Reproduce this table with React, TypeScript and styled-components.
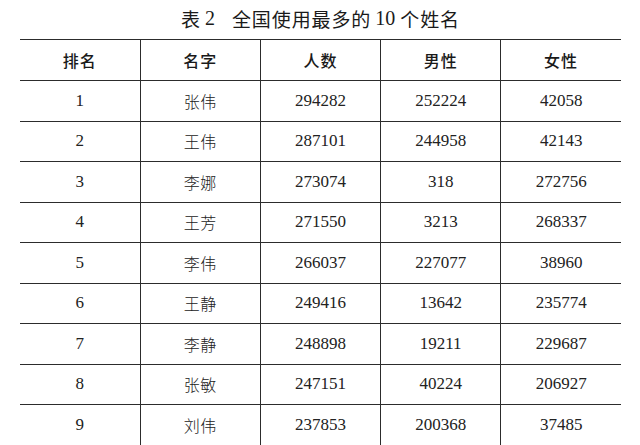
import styled, { createGlobalStyle } from "styled-components";

/* ── GLOBAL ── */

const GlobalStyle = createGlobalStyle`
  html, body {
    margin: 0;
    padding: 0;
    background: #ffffff;
  }
`;

/* ── STYLED COMPONENTS ── */

const Page = styled.div`
  width: 640px;
  height: 445px;
  overflow: hidden;
  padding: 0 19px 0 20px;
  box-sizing: border-box;
  color: #1e1e1e;
`;

const Caption = styled.div`
  height: 39px;
  display: flex;
  align-items: center;
  justify-content: center;
  padding-bottom: 3px;
  box-sizing: border-box;
  font-family: "Noto Sans CJK SC", sans-serif;
  font-size: 19px;
  letter-spacing: 0.9px;
  color: #1a1a1a;
`;

const Num = styled.span`
  font-family: "Liberation Serif", "Noto Sans CJK SC", serif;
  font-size: 20px;
  letter-spacing: 0;
  margin: 0 5px 0 4px;
`;

const Gap = styled.span`
  display: inline-block;
  width: 12px;
`;

const Table = styled.table`
  width: 601px;
  border-collapse: collapse;
  table-layout: fixed;
  border-top: 1.5px solid #2c2c2c;
`;

const HeadCell = styled.th<{ $first?: boolean }>`
  height: 40px;
  padding: 0;
  text-align: center;
  font-family: "Noto Sans CJK SC", sans-serif;
  font-weight: 500;
  font-size: 16px;
  letter-spacing: 1px;
  color: #1a1a1a;
  border-bottom: 1.5px solid #2c2c2c;
  border-left: ${(p) => (p.$first ? "none" : "1px solid #2c2c2c")};
`;

const Cell = styled.td<{ $first?: boolean; $name?: boolean }>`
  height: 39.5px;
  padding: 0;
  text-align: center;
  font-family: ${(p) =>
    p.$name ? `"Noto Sans CJK SC", sans-serif` : `"Liberation Serif", serif`};
  font-weight: ${(p) => (p.$name ? 300 : 400)};
  font-size: ${(p) => (p.$name ? "16px" : "17px")};
  letter-spacing: ${(p) => (p.$name ? "0.5px" : "0")};
  color: #222;
  border-bottom: 1.5px solid #2c2c2c;
  border-left: ${(p) => (p.$first ? "none" : "1px solid #2c2c2c")};
`;

/* ── DATA ── */

const rows = [
  ["1", "张伟", "294282", "252224", "42058"],
  ["2", "王伟", "287101", "244958", "42143"],
  ["3", "李娜", "273074", "318", "272756"],
  ["4", "王芳", "271550", "3213", "268337"],
  ["5", "李伟", "266037", "227077", "38960"],
  ["6", "王静", "249416", "13642", "235774"],
  ["7", "李静", "248898", "19211", "229687"],
  ["8", "张敏", "247151", "40224", "206927"],
  ["9", "刘伟", "237853", "200368", "37485"],
];

const headers = ["排名", "名字", "人数", "男性", "女性"];

/* ── COMPONENT ── */

function App() {
  return (
    <>
      <GlobalStyle />
      <Page>
        <Caption>
          表<Num>2</Num>
          <Gap />
          全国使用最多的<Num>10</Num>个姓名
        </Caption>
        <Table>
          <thead>
            <tr>
              {headers.map((h, i) => (
                <HeadCell key={h} $first={i === 0}>
                  {h}
                </HeadCell>
              ))}
            </tr>
          </thead>
          <tbody>
            {rows.map((row) => (
              <tr key={row[0]}>
                {row.map((v, i) => (
                  <Cell key={i} $first={i === 0} $name={i === 1}>
                    {v}
                  </Cell>
                ))}
              </tr>
            ))}
          </tbody>
        </Table>
      </Page>
    </>
  );
}

export default App;
